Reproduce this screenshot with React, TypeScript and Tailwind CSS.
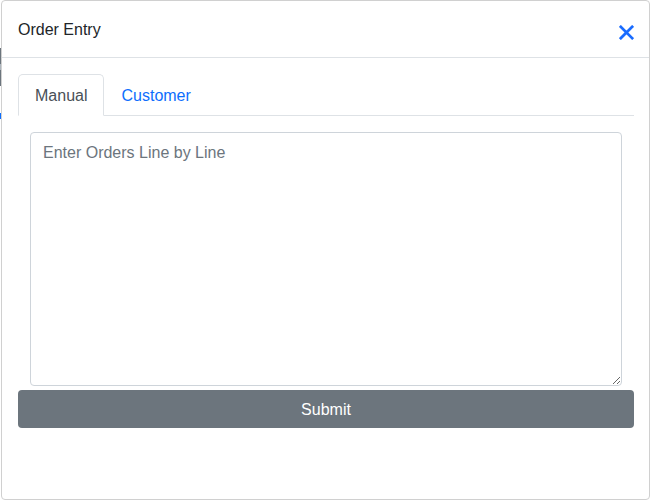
import { useState } from "react";

const font = { fontFamily: '"Liberation Sans", Arial, sans-serif' };

export default function App() {
  const [tab, setTab] = useState("manual");

  return (
    <div className="flex h-[502px] w-[650px] bg-white text-[#212529]" style={font}>
      {/* bits of the page behind the modal */}
      <div className="flex w-px flex-col">
        <div className="h-[48px]" />
        <div className="h-[16px] bg-[#6c757d]" />
        <div className="h-[6px] bg-[#adb5bd]" />
        <div className="h-[16px] bg-[#6c757d]" />
        <div className="h-[27px]" />
        <div className="h-[6px] bg-[#0d6efd]" />
      </div>

      <div className="flex h-[500px] w-[649px] flex-col rounded-[4px] border border-[#d0d0d0] bg-white">
        <div className="flex h-[57px] items-center justify-between border-b border-[#dee2e6] pl-[16px] pr-[15px]">
          <div className="pt-[2px] text-[16px]">Order Entry</div>
          <button className="mt-[6px] flex h-[16px] w-[16px] items-center justify-center">
            <svg width="15" height="15" viewBox="0 0 16 16">
              <path d="M2 2L14 14M14 2L2 14" stroke="#1a6cff" strokeWidth="3" strokeLinecap="square" />
            </svg>
          </button>
        </div>

        <div className="flex flex-col pl-[16px] pr-[15px] pt-[16px]">
          <div className="flex border-b border-[#dee2e6] text-[16px]">
            <button
              onClick={() => setTab("manual")}
              className={`-mb-px h-[42px] rounded-t-[5px] border px-[16px] pt-[2px] leading-[24px] ${
                tab === "manual"
                  ? "border-[#dee2e6] border-b-white bg-white text-[#495057]"
                  : "border-transparent text-[#0d6efd]"
              }`}
            >
              Manual
            </button>
            <button
              onClick={() => setTab("customer")}
              className={`-mb-px h-[42px] rounded-t-[5px] border px-[16px] pt-[2px] leading-[24px] ${
                tab === "customer"
                  ? "border-[#dee2e6] border-b-white bg-white text-[#495057]"
                  : "border-transparent text-[#0d6efd]"
              }`}
            >
              Customer
            </button>
          </div>

          <div className="px-[12px] pt-[16px]">
            <textarea
              placeholder="Enter Orders Line by Line"
              className="block h-[254px] w-full rounded-[4px] border border-[#ced4da] px-[12px] py-[8px] text-[16px] leading-[24px] text-[#212529] outline-none placeholder:text-[#6c757d]"
            />
          </div>

          <button className="mt-[4px] h-[38px] w-full rounded-[4px] bg-[#6c757d] pt-[2px] text-[16px] text-white">
            Submit
          </button>
        </div>
      </div>
    </div>
  );
}
